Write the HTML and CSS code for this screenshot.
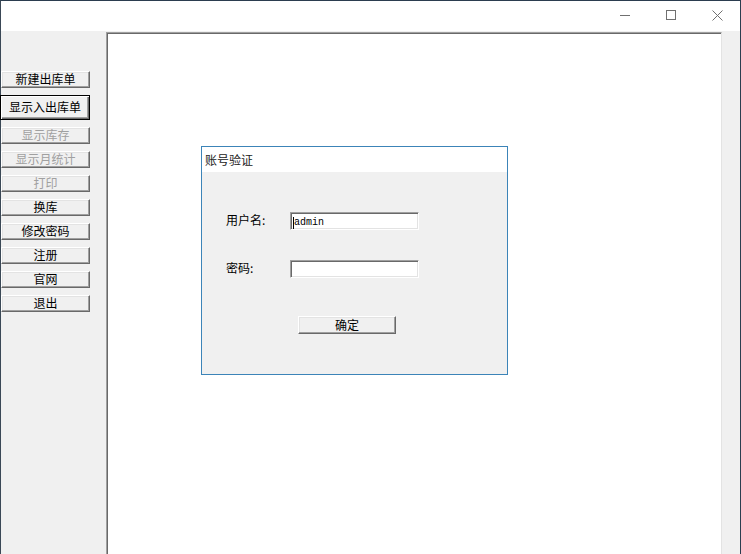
FILE: index.html
```html
<!DOCTYPE html>
<html lang="zh-CN">
<head>
  <meta charset="UTF-8" />
  <title>出入库管理</title>
  <link rel="stylesheet" href="styles.css">
</head>
<body>
  <div class="window">
    <div class="titlebar">
      <span class="capBtn">
        <svg width="10" height="10" viewBox="0 0 10 10"><path d="M0 5.5h10" stroke="#707070" stroke-width="1" fill="none"/></svg>
      </span>
      <span class="capBtn">
        <svg width="10" height="10" viewBox="0 0 10 10"><rect x="0.5" y="0.5" width="9" height="9" stroke="#707070" stroke-width="1" fill="none"/></svg>
      </span>
      <span class="capBtn">
        <svg width="11" height="11" viewBox="0 0 11 11"><path d="M0.5 0.5l10 10M10.5 0.5l-10 10" stroke="#707070" stroke-width="1" fill="none"/></svg>
      </span>
    </div>

    <div class="client">
      <div class="sidebar">
        <button class="navBtn">新建出库单</button>
        <button class="navBtn isDefault">显示入出库单</button>
        <button class="navBtn" disabled>显示库存</button>
        <button class="navBtn" disabled>显示月统计</button>
        <button class="navBtn" disabled>打印</button>
        <button class="navBtn">换库</button>
        <button class="navBtn">修改密码</button>
        <button class="navBtn">注册</button>
        <button class="navBtn">官网</button>
        <button class="navBtn">退出</button>
      </div>

      <div class="mdiArea">
        <div class="loginDlg">
          <div class="dlgTitle">账号验证</div>
          <div class="dlgBody">
            <div class="formRow">
              <span class="formLabel">用户名:</span>
              <div class="field"><span class="caret"></span>admin</div>
            </div>
            <div class="formRow">
              <span class="formLabel">密码:</span>
              <div class="field"></div>
            </div>
            <button class="okBtn">确定</button>
          </div>
        </div>
      </div>

      <div class="gutter"></div>
    </div>
  </div>
</body>
</html>
```

FILE: styles.css
```css
* {
  box-sizing: border-box;
}
html, body {
  margin: 0;
  height: 100%;
  overflow: hidden;
}
body {
  background: #f0f0f0;
  color: #000;
  font-family: "Noto Sans CJK SC", "Liberation Sans", sans-serif;
  font-size: 12px;
}
.window {
  height: 554px;
  display: flex;
  flex-direction: column;
  border-top: 1px solid #2b3d4f;
  border-left: 1px solid #3a4856;
  border-right: 1px solid #2b3d4f;
}
.titlebar {
  height: 30px;
  flex-shrink: 0;
  background: #fff;
  display: flex;
  justify-content: flex-end;
}
.capBtn {
  width: 46px;
  height: 30px;
  display: flex;
  align-items: center;
  justify-content: center;
  padding-bottom: 2px;
}
.capBtn svg {
  display: block;
}
.client {
  flex: 1;
  display: flex;
  min-height: 0;
}
.sidebar {
  width: 105px;
  flex-shrink: 0;
  padding-top: 40px;
  display: flex;
  flex-direction: column;
  align-items: flex-start;
  gap: 7px;
}
.navBtn, .okBtn {
  margin: 0;
  padding: 0 0 1px;
  font-family: inherit;
  font-size: 12px;
  line-height: 1;
  color: #000;
  background: #f0f0f0;
  border: 1px solid;
  border-color: #fff #696969 #696969 #fff;
  box-shadow: inset -1px -1px #a0a0a0, inset 1px 1px #e3e3e3;
  border-radius: 0;
}
.navBtn {
  width: 89px;
  height: 17px;
}
.navBtn.isDefault {
  height: 25px;
  width: 90px;
  margin-left: -1px;
  border-color: #000;
  box-shadow: inset 1px 1px #fff, inset -1px -1px #696969, inset -2px -2px #a0a0a0;
}
.navBtn:disabled {
  color: #a0a0a0;
}
.mdiArea {
  width: 616px;
  flex-shrink: 0;
  margin-top: 1px;
  background: #fff;
  border-top: 1px solid #a0a0a0;
  border-left: 1px solid #a0a0a0;
  border-right: 1px solid #e3e3e3;
  box-shadow: inset 1px 1px #696969;
  padding: 113px 0 0 94px;
}
.gutter {
  flex: 1;
}
.loginDlg {
  width: 307px;
  height: 229px;
  border: 1px solid #3c84b8;
  background: #f0f0f0;
  display: flex;
  flex-direction: column;
}
.dlgTitle {
  height: 25px;
  flex-shrink: 0;
  background: #fff;
  padding-left: 3px;
  display: flex;
  align-items: center;
  color: #222;
}
.dlgBody {
  padding: 40px 0 0 24px;
  display: flex;
  flex-direction: column;
  gap: 30px;
}
.formRow {
  display: flex;
  align-items: center;
  height: 18px;
}
.formLabel {
  width: 64px;
  padding-bottom: 4px;
}
.field {
  width: 129px;
  height: 18px;
  background: #fff;
  border: 1px solid;
  border-color: #a0a0a0 #fff #fff #a0a0a0;
  box-shadow: inset 1px 1px #696969, inset -1px -1px #e3e3e3;
  padding: 3px 0 0 2px;
  display: flex;
  align-items: center;
  font-family: "Liberation Mono", monospace;
  font-size: 10px;
  line-height: 1;
}
.caret {
  width: 1px;
  height: 12px;
  background: #000;
}
.okBtn {
  width: 98px;
  height: 18px;
  margin: 8px 0 0 72px;
}
```
